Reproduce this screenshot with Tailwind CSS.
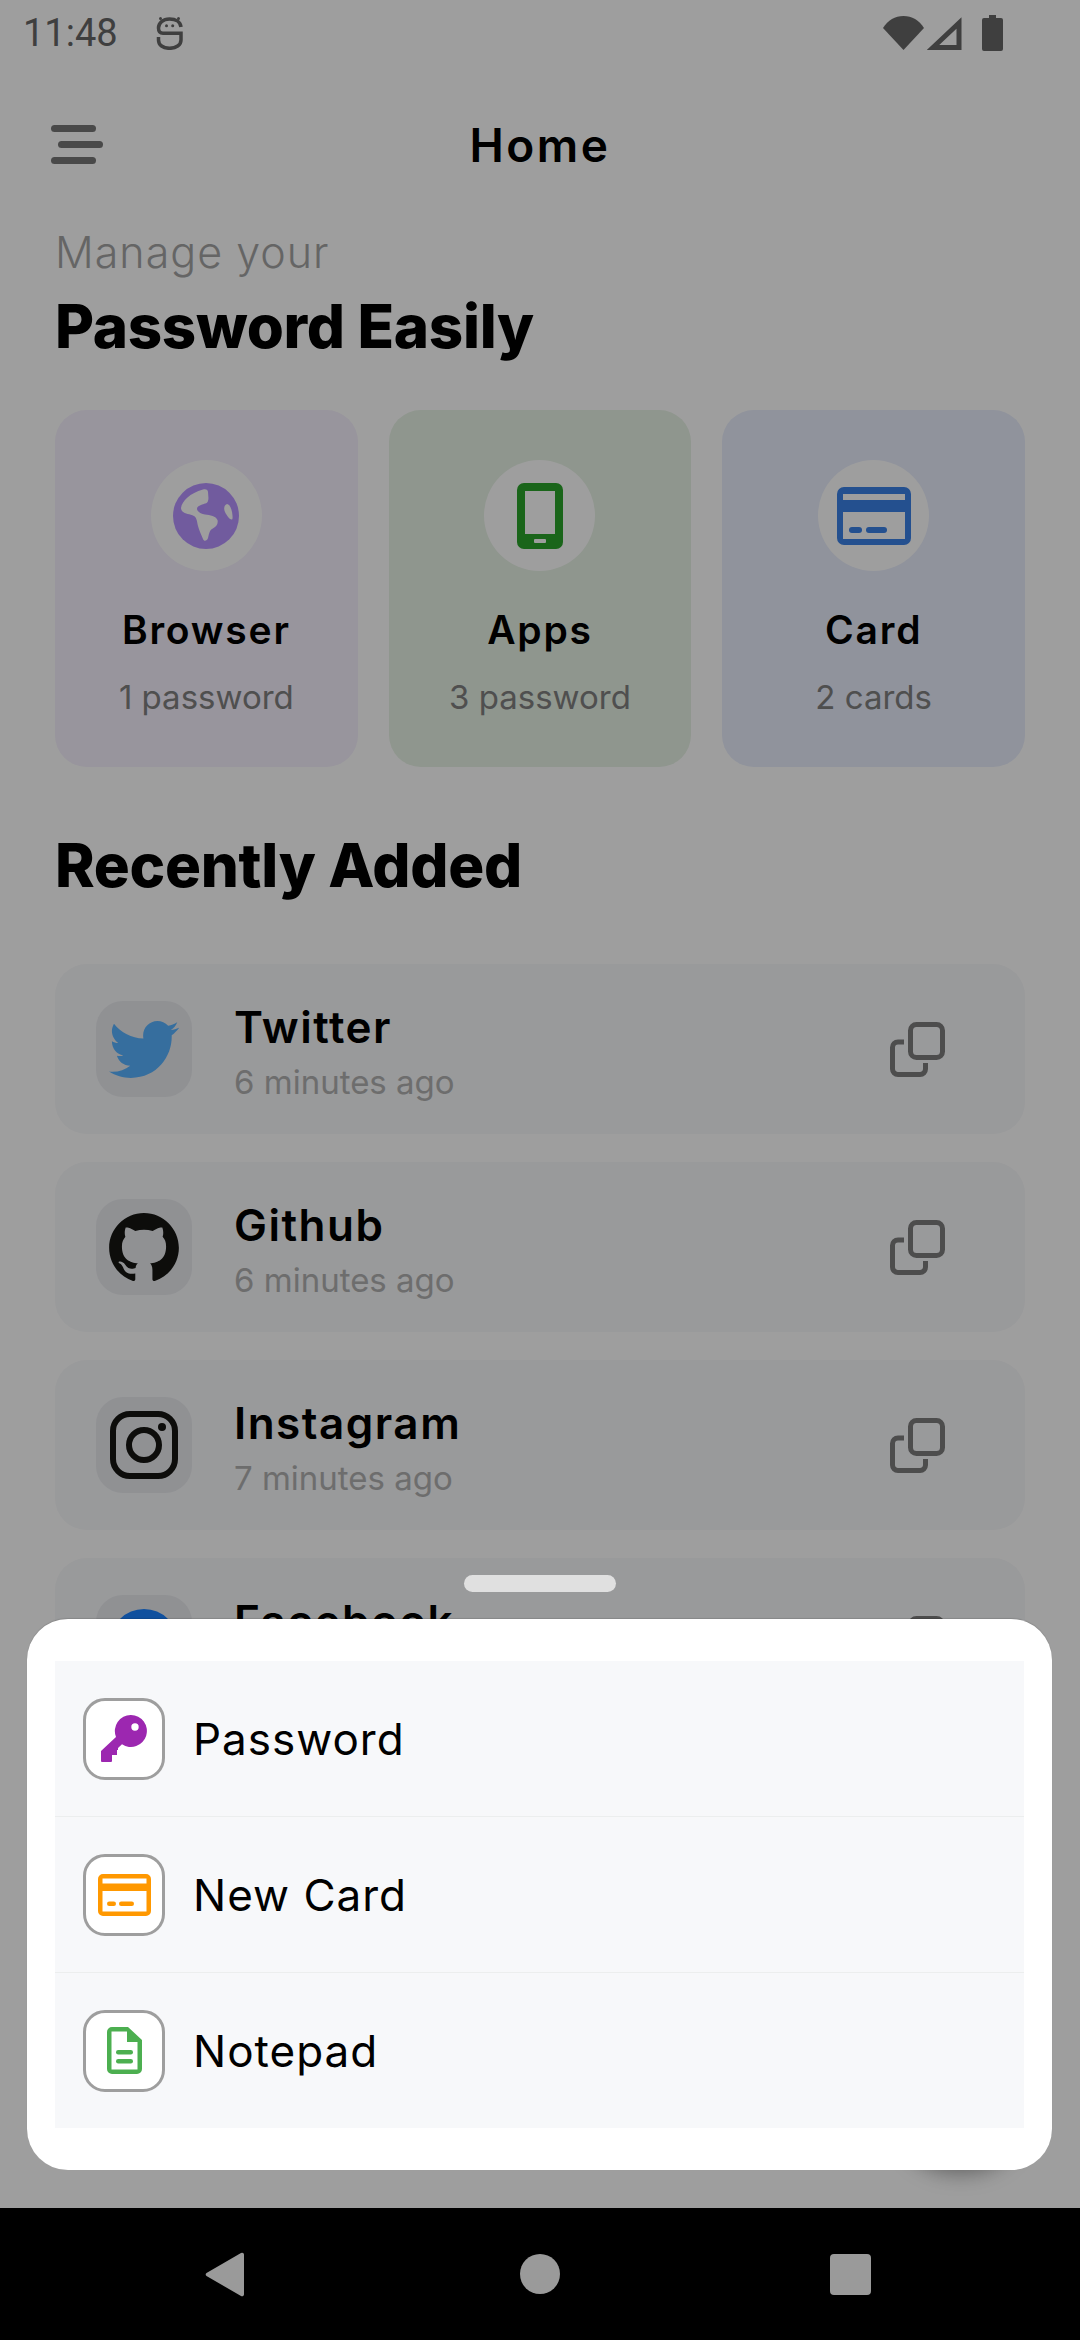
<!DOCTYPE html>
<html lang="en">
<head>
    <meta charset="UTF-8">
    <meta name="viewport" content="width=device-width, initial-scale=1.0">
    <script src="https://cdn.jsdelivr.net/npm/@tailwindcss/browser@4"></script>
    <title>Home</title>
</head>
<body class="bg-black">
<div class="relative w-[1080px] h-[2340px] overflow-hidden bg-black font-['Inter',sans-serif] text-black">

    <!-- page under the scrim -->
    <div class="h-[2208px] overflow-hidden bg-white">
        <!-- status bar -->
        <div class="flex h-[66px] items-center pl-[23px] pr-[77px] text-[#666]">
            <span class="font-['Roboto',sans-serif] text-[38px] leading-none">11:48</span>
            <svg class="ml-[38px] w-[27px] h-[34px]" viewBox="0 0 27 34" fill="none" stroke="#666" stroke-width="3.500">
                <path d="M25 11C24.500 6 20 3 13.500 3C7 3 2.500 7 2.500 12C2.500 15 4 17.300 7 17.300H25V24C25 29 20 32.300 13.500 32.300C7 32.300 2.500 29 2.500 24V21"/>
                <circle cx="4.500" cy="2.500" r="1.500" fill="#666" stroke="none"/><circle cx="22.500" cy="2.500" r="1.500" fill="#666" stroke="none"/>
                <circle cx="10.500" cy="9.700" r="1.500" fill="#666" stroke="none"/><circle cx="16.700" cy="9.700" r="1.500" fill="#666" stroke="none"/>
            </svg>
            <div class="ml-auto flex items-center">
                <svg class="w-[41px] h-[34px]" viewBox="0 0 41 34" fill="#666"><path d="M20.500 34L0 12C5 4 12 0 20.500 0S36 4 41 12Z"/></svg>
                <svg class="ml-[3px] w-[35px] h-[34px]" viewBox="0 0 35 34" fill="none" stroke="#666" stroke-width="5"><path d="M32 7V31.500H6Z"/></svg>
                <svg class="ml-[20px] w-[21px] h-[36px]" viewBox="0 0 21 36" fill="#666"><path d="M7 0H14V3H19A2 2 0 0 1 21 5V34A2 2 0 0 1 19 36H2A2 2 0 0 1 0 34V5A2 2 0 0 1 2 3H7Z"/></svg>
            </div>
        </div>

        <!-- app bar -->
        <div class="relative flex h-[158px] items-center justify-center">
            <div class="absolute left-[51px] top-[59px] flex w-[52px] flex-col gap-[9px]">
                <span class="h-[7px] w-[45px] rounded-full bg-[#777]"></span>
                <span class="ml-[7px] h-[7px] w-[45px] rounded-full bg-[#777]"></span>
                <span class="h-[7px] w-[45px] rounded-full bg-[#777]"></span>
            </div>
            <h1 class="text-[46px] font-semibold leading-none tracking-[2.500px]">Home</h1>
        </div>

        <div class="px-[55px]">
            <p class="mt-[3px] text-[43px] font-light leading-[50px] tracking-[1px] text-[#a4a4a4]">Manage your</p>
            <h2 class="mt-[16px] text-[60px] font-extrabold leading-[66px] tracking-[-0.3px]">Password Easily</h2>

            <!-- category cards -->
            <div class="mt-[51px] grid grid-cols-3 gap-[31px]">
                <div class="flex h-[357px] flex-col items-center rounded-[32px] bg-[#f5f0fd] pt-[50px]">
                    <div class="flex h-[111px] w-[111px] items-center justify-center rounded-full bg-white">
                        <svg class="w-[66px] h-[66px]" viewBox="0 0 66 66">
                            <circle cx="33" cy="33" r="33" fill="#b794ff"/>
                            <path d="M8 25C9 18 17 10 30 6.500C33 5.500 35 7 35 9C35 12 36 15 35 18C34 21 31 20.500 28 22C25 23 23 25 24.500 27.500C26 30 29 31 32 31.500C37 32 43 33 44.500 37C45.500 41 43 44 39 46C36 48 36 52 35 55C34 58 31 59 30 56C28 51 26 47 25 43C24 39 24 35 21 33C17 31 12 31 9.500 28.500C8.500 27.500 8 26 8 25Z" fill="#fff"/>
                            <path d="M54 21C56 21 58 24 59 29C59.500 32 60 36 59 36.500C57 37 54 33 52 29C50.500 26 51 22 54 21Z" fill="#fff"/>
                        </svg>
                    </div>
                    <h3 class="mt-[37px] text-[39px] font-semibold leading-[44px] tracking-[1.800px]">Browser</h3>
                    <p class="mt-[28px] text-[33px] leading-[34px] text-[#808080]">1 password</p>
                </div>
                <div class="flex h-[357px] flex-col items-center rounded-[32px] bg-[#e7f2e5] pt-[50px]">
                    <div class="flex h-[111px] w-[111px] items-center justify-center rounded-full bg-white">
                        <svg class="w-[46px] h-[66px]" viewBox="0 0 46 66">
                            <rect width="46" height="66" rx="7" fill="#2aa32a"/>
                            <rect x="8" y="8" width="30" height="43" fill="#fff"/>
                            <rect x="17" y="56" width="12" height="4" rx="1" fill="#fff"/>
                        </svg>
                    </div>
                    <h3 class="mt-[37px] text-[39px] font-semibold leading-[44px] tracking-[1.800px]">Apps</h3>
                    <p class="mt-[28px] text-[33px] leading-[34px] text-[#808080]">3 password</p>
                </div>
                <div class="flex h-[357px] flex-col items-center rounded-[32px] bg-[#e8edfc] pt-[50px]">
                    <div class="flex h-[111px] w-[111px] items-center justify-center rounded-full bg-white">
                        <svg class="w-[74px] h-[58px]" viewBox="0 0 74 58">
                            <rect width="74" height="58" rx="7" fill="#3a81e7"/>
                            <rect x="6" y="7" width="62" height="6" fill="#fff"/>
                            <rect x="6" y="25" width="62" height="27" fill="#fff"/>
                            <rect x="12" y="40" width="13" height="6" rx="3" fill="#3a81e7"/>
                            <rect x="29" y="40" width="21" height="6" rx="3" fill="#3a81e7"/>
                        </svg>
                    </div>
                    <h3 class="mt-[37px] text-[39px] font-semibold leading-[44px] tracking-[1.800px]">Card</h3>
                    <p class="mt-[28px] text-[33px] leading-[34px] text-[#808080]">2 cards</p>
                </div>
            </div>

            <h2 class="mt-[65px] text-[60px] font-extrabold leading-[66px] tracking-[-0.3px]">Recently Added</h2>

            <!-- recent list -->
            <div class="mt-[66px] flex flex-col gap-[28px]">
                <div class="flex h-[170px] items-center rounded-[32px] bg-[#f7f8fa] pl-[41px] pr-[80px]">
                    <div class="flex h-[96px] w-[96px] items-center justify-center rounded-[27px] bg-[#e8eaee]">
                        <svg class="w-[70px] h-[57px]" viewBox="0 0 24 19.500" fill="#58b2ff"><path d="M24 2.300c-.9.400-1.800.7-2.800.8 1-.6 1.800-1.600 2.200-2.700-1 .6-2 1-3.100 1.200C19.300.600 18 0 16.600 0c-2.700 0-4.900 2.200-4.900 4.900 0 .4 0 .8.100 1.100C7.700 5.800 4.100 3.900 1.700.900c-.4.700-.7 1.600-.7 2.500 0 1.700.9 3.200 2.200 4.100-.8 0-1.600-.2-2.200-.6v.1c0 2.400 1.700 4.400 3.900 4.800-.4.100-.8.200-1.300.2-.3 0-.6 0-.9-.1.600 2 2.400 3.400 4.600 3.400-1.700 1.300-3.800 2.100-6.100 2.100-.4 0-.8 0-1.200-.1 2.200 1.400 4.800 2.200 7.500 2.200 9.100 0 14-7.500 14-14v-.6c1-.7 1.800-1.600 2.500-2.500z"/></svg>
                    </div>
                    <div class="ml-[42px] pt-[6px]">
                        <p class="text-[44px] font-semibold leading-[50px] tracking-[1.500px]">Twitter</p>
                        <p class="mt-[9px] text-[33px] leading-[42px] text-[#b1b1b1]">6 minutes ago</p>
                    </div>
                    <svg class="ml-auto w-[55px] h-[55px]" viewBox="0 0 55 55" fill="none" stroke="#7c7c7c" stroke-width="5"><rect x="20.500" y="2.500" width="32" height="33" rx="6"/><path d="M14 20H8A5.500 5.500 0 0 0 2.500 25.500V47A5.500 5.500 0 0 0 8 52.500H30A5.500 5.500 0 0 0 35.500 47V41"/></svg>
                </div>
                <div class="flex h-[170px] items-center rounded-[32px] bg-[#f7f8fa] pl-[41px] pr-[80px]">
                    <div class="flex h-[96px] w-[96px] items-center justify-center rounded-[27px] bg-[#e8eaee]">
                        <svg class="w-[70px] h-[68px]" viewBox="0 0 24 23.400" fill="#151512"><path d="M12 0C5.400 0 0 5.400 0 12c0 5.300 3.400 9.800 8.200 11.400.6.100.8-.3.800-.6v-2c-3.300.7-4-1.600-4-1.600-.5-1.400-1.300-1.800-1.300-1.800-1.100-.7.100-.7.100-.7 1.200.1 1.800 1.200 1.800 1.200 1.100 1.800 2.800 1.300 3.500 1 .1-.8.400-1.300.8-1.600-2.700-.3-5.500-1.300-5.500-5.900 0-1.300.5-2.400 1.200-3.200-.1-.3-.5-1.500.1-3.200 0 0 1-.3 3.300 1.200 1-.3 2-.4 3-.4s2 .1 3 .4c2.300-1.500 3.300-1.200 3.300-1.200.6 1.700.2 2.900.1 3.200.8.800 1.200 1.900 1.200 3.200 0 4.600-2.800 5.600-5.500 5.900.4.400.8 1.100.8 2.200v3.300c0 .3.200.7.800.6C20.600 21.800 24 17.300 24 12 24 5.400 18.600 0 12 0z"/></svg>
                    </div>
                    <div class="ml-[42px] pt-[6px]">
                        <p class="text-[44px] font-semibold leading-[50px] tracking-[1.500px]">Github</p>
                        <p class="mt-[9px] text-[33px] leading-[42px] text-[#b1b1b1]">6 minutes ago</p>
                    </div>
                    <svg class="ml-auto w-[55px] h-[55px]" viewBox="0 0 55 55" fill="none" stroke="#7c7c7c" stroke-width="5"><rect x="20.500" y="2.500" width="32" height="33" rx="6"/><path d="M14 20H8A5.500 5.500 0 0 0 2.500 25.500V47A5.500 5.500 0 0 0 8 52.500H30A5.500 5.500 0 0 0 35.500 47V41"/></svg>
                </div>
                <div class="flex h-[170px] items-center rounded-[32px] bg-[#f7f8fa] pl-[41px] pr-[80px]">
                    <div class="flex h-[96px] w-[96px] items-center justify-center rounded-[27px] bg-[#e8eaee]">
                        <svg class="w-[68px] h-[68px]" viewBox="0 0 68 68" fill="none" stroke="#151512" stroke-width="6"><rect x="3" y="3" width="62" height="62" rx="17"/><circle cx="34" cy="34" r="15"/><circle cx="52" cy="16" r="4" fill="#151512" stroke="none"/></svg>
                    </div>
                    <div class="ml-[42px] pt-[6px]">
                        <p class="text-[44px] font-semibold leading-[50px] tracking-[1.500px]">Instagram</p>
                        <p class="mt-[9px] text-[33px] leading-[42px] text-[#b1b1b1]">7 minutes ago</p>
                    </div>
                    <svg class="ml-auto w-[55px] h-[55px]" viewBox="0 0 55 55" fill="none" stroke="#7c7c7c" stroke-width="5"><rect x="20.500" y="2.500" width="32" height="33" rx="6"/><path d="M14 20H8A5.500 5.500 0 0 0 2.500 25.500V47A5.500 5.500 0 0 0 8 52.500H30A5.500 5.500 0 0 0 35.500 47V41"/></svg>
                </div>
                <div class="flex h-[170px] items-center rounded-[32px] bg-[#f7f8fa] pl-[41px] pr-[80px]">
                    <div class="flex h-[96px] w-[96px] items-center justify-center rounded-[27px] bg-[#e8eaee]">
                        <div class="h-[68px] w-[68px] rounded-full bg-[#1a81ff]"></div>
                    </div>
                    <div class="ml-[42px] pt-[6px]">
                        <p class="text-[44px] font-semibold leading-[50px] tracking-[1.500px]">Facebook</p>
                        <p class="mt-[9px] text-[33px] leading-[42px] text-[#b1b1b1]">8 minutes ago</p>
                    </div>
                    <svg class="ml-auto w-[55px] h-[55px]" viewBox="0 0 55 55" fill="none" stroke="#7c7c7c" stroke-width="5"><rect x="20.500" y="2.500" width="32" height="33" rx="6"/><path d="M14 20H8A5.500 5.500 0 0 0 2.500 25.500V47A5.500 5.500 0 0 0 8 52.500H30A5.500 5.500 0 0 0 35.500 47V41"/></svg>
                </div>
            </div>
        </div>

        <!-- add button, mostly hidden by the sheet -->
        <div class="absolute left-[898px] top-[2045px] h-[115px] w-[125px] rounded-full bg-white shadow-[0_12px_22px_rgba(0,0,0,0.42)]"></div>
    </div>

    <!-- scrim -->
    <div class="absolute inset-x-0 top-0 h-[2208px] bg-black/[0.38]"></div>

    <!-- bottom sheet -->
    <div class="absolute left-[464px] top-[1575px] h-[17px] w-[152px] rounded-full bg-[#e0e0e0]"></div>
    <div class="absolute left-[27px] top-[1619px] w-[1025px] rounded-[41px] bg-white px-[28px] py-[42px] shadow-[0_-1px_1px_rgba(0,0,0,0.12)]">
        <div class="flex h-[156px] items-center border-b border-[#eceeee] bg-[#f7f8fa] pl-[28px]">
            <div class="flex h-[82px] w-[82px] items-center justify-center rounded-[22px] border-[3px] border-[#9e9e9e] bg-white">
                <svg class="w-[48px] h-[48px]" viewBox="0 0 48 48" fill="#9c27b0"><path fill-rule="evenodd" d="M31 0A16 16 0 1 1 22 29.300L18 33V35H17V40H12V46Q12 47 11 47H2Q1 47 1 46V36L16 22A16 16 0 0 1 31 0ZM35 8.300A3.700 3.700 0 1 0 35 15.700A3.700 3.700 0 1 0 35 8.300Z"/></svg>
            </div>
            <span class="ml-[28px] text-[44px] leading-none tracking-[1px]">Password</span>
        </div>
        <div class="flex h-[156px] items-center border-b border-[#eceeee] bg-[#f7f8fa] pl-[28px]">
            <div class="flex h-[82px] w-[82px] items-center justify-center rounded-[22px] border-[3px] border-[#9e9e9e] bg-white">
                <svg class="w-[53px] h-[42px]" viewBox="0 0 53 42" fill="#ff9800"><path d="M5 0H48A5 5 0 0 1 53 5V37A5 5 0 0 1 48 42H5A5 5 0 0 1 0 37V5A5 5 0 0 1 5 0ZM4.500 4.500V9.500H48.500V4.500ZM4.500 17V37.500H48.500V17Z" fill-rule="evenodd"/><rect x="9" y="27.500" width="9" height="4.500" rx="2.200"/><rect x="21" y="27.500" width="15" height="4.500" rx="2.200"/></svg>
            </div>
            <span class="ml-[28px] text-[44px] leading-none tracking-[1px]">New Card</span>
        </div>
        <div class="flex h-[155px] items-center bg-[#f7f8fa] pl-[28px]">
            <div class="flex h-[82px] w-[82px] items-center justify-center rounded-[22px] border-[3px] border-[#9e9e9e] bg-white">
                <svg class="w-[35px] h-[47px]" viewBox="0 0 35 47" fill="#4caf50"><path d="M5 0H21L35 13V42A5 5 0 0 1 30 47H5A5 5 0 0 1 0 42V5A5 5 0 0 1 5 0ZM4.500 4.500V42.500H30.500V15H20V4.500Z" fill-rule="evenodd"/><rect x="9" y="23" width="17" height="4.500" rx="2.200"/><rect x="9" y="32" width="17" height="4.500" rx="2.200"/></svg>
            </div>
            <span class="ml-[28px] text-[44px] leading-none tracking-[1px]">Notepad</span>
        </div>
    </div>

    <!-- navigation bar -->
    <div class="absolute inset-x-0 bottom-0 h-[132px] bg-black">
        <svg class="absolute left-[205px] top-[44px] w-[40px] h-[45px]" viewBox="0 0 40 45" fill="#9a9a9a"><path d="M39 3V42A2 2 0 0 1 36 44L1.500 24A2 2 0 0 1 1.500 21L36 1A2 2 0 0 1 39 3Z"/></svg>
        <div class="absolute left-[520px] top-[46px] h-[40px] w-[40px] rounded-full bg-[#9a9a9a]"></div>
        <div class="absolute left-[830px] top-[46px] h-[41px] w-[41px] rounded-[4px] bg-[#9a9a9a]"></div>
    </div>
</div>
</body>
</html>
